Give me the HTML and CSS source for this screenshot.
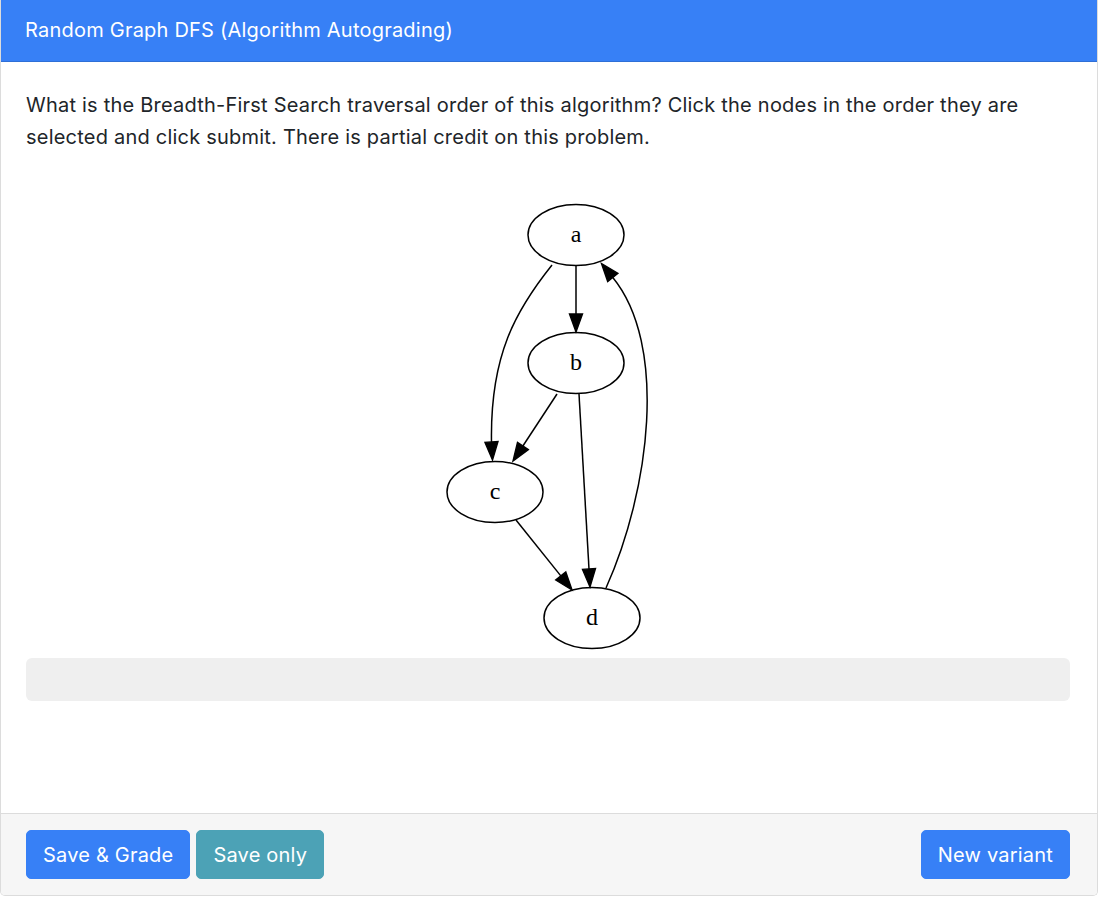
FILE: index.html
```html
<!DOCTYPE html>
<html lang="en">
<head>
<meta charset="utf-8">
<title>Random Graph DFS</title>
<link rel="stylesheet" href="styles.css">
</head>
<body>
<div class="card">
  <div class="card-header">Random Graph DFS (Algorithm Autograding)</div>
  <div class="card-body">
    <p class="prompt">What is the Breadth-First Search traversal order of this algorithm? Click the nodes in the order they are selected and click submit. There is partial credit on this problem.</p>
    <div class="graph-wrap">
      <svg class="graph" width="220" height="458" viewBox="438 198 220 458" xmlns="http://www.w3.org/2000/svg">
        <g fill="none" stroke="#000" stroke-width="1.5">
          <ellipse cx="576" cy="235" rx="48" ry="30.5"/>
          <ellipse cx="576" cy="363" rx="48" ry="30.5"/>
          <ellipse cx="495" cy="492" rx="48" ry="30.5"/>
          <ellipse cx="592" cy="618" rx="48" ry="30.5"/>
          <path d="M576,266 L576,314"/>
          <path d="M552,265 C516,310 490,355 491.5,442"/>
          <path d="M557,394 L522.9,446"/>
          <path d="M579,394 L589,569"/>
          <path d="M516,520 L560.8,575.9"/>
          <path d="M606,588 C650,490 668,345 612.8,277.5"/>
        </g>
        <g fill="#000" stroke="#000" stroke-width="1.4">
          <polygon points="569.5,314 576,332 582.5,314"/>
          <polygon points="485,442.4 492.5,460 498,441.6"/>
          <polygon points="528.3,449.6 513,461 517.5,442.4"/>
          <polygon points="595.5,568.6 590,587 582.5,569.4"/>
          <polygon points="565.8,571.9 572,590 555.7,580"/>
          <polygon points="617.9,273.4 601.5,263.5 607.7,281.6"/>
        </g>
        <g class="labels" text-anchor="middle">
          <text x="576" y="242">a</text>
          <text x="576" y="370">b</text>
          <text x="495" y="499">c</text>
          <text x="592" y="625">d</text>
        </g>
      </svg>
    </div>
    <div class="answer-box"></div>
  </div>
  <div class="card-footer">
    <div class="btn-group">
      <button class="btn btn-primary">Save &amp; Grade</button>
      <button class="btn btn-info">Save only</button>
    </div>
    <button class="btn btn-primary">New variant</button>
  </div>
</div>
</body>
</html>
```
FILE: styles.css
```css
html, body {
  margin: 0;
  padding: 0;
  background: #fff;
}

body {
  font-family: Inter, "Noto Sans", "Liberation Sans", sans-serif;
  font-size: 20px;
  letter-spacing: 0.22px;
  color: #212529;
}

.card {
  width: 1096px;
  border: 1px solid #dcdcdc;
  border-top: none;
  border-radius: 0 0 5px 5px;
  overflow: hidden;
}

.card-header {
  background: #3780f6;
  color: #fff;
  font-size: 20px;
  line-height: 30px;
  padding: 15px 25px 16px;
  border-bottom: 1px solid #2f6fd6;
  margin: 0 -1px;
}

.card-body {
  padding: 27px 27px 112px 25px;
}

.prompt {
  margin: 0;
  line-height: 32px;
}

.graph-wrap {
  display: flex;
  justify-content: center;
  margin-top: 45px;
}

.graph {
  display: block;
}

.labels text {
  font-family: "Liberation Serif", "DejaVu Serif", serif;
  font-size: 24px;
  letter-spacing: 0;
  fill: #000;
}

.answer-box {
  margin-top: 2px;
  height: 43px;
  background: #efefef;
  border-radius: 6px;
}

.card-footer {
  background: #f6f6f6;
  border-top: 1px solid #dcdcdc;
  padding: 16px 27px 16px 25px;
  display: flex;
  justify-content: space-between;
  align-items: center;
}

.btn-group {
  display: flex;
  gap: 6px;
}

.btn {
  font-family: inherit;
  font-size: 20px;
  letter-spacing: 0.2px;
  line-height: 30px;
  padding: 8.5px 16px;
  border: 1px solid transparent;
  border-radius: 5px;
  color: #fff;
  cursor: pointer;
}

.btn-primary {
  background: #3780f6;
  border-color: #3780f6;
}

.btn-info {
  background: #4ca2b6;
  border-color: #4ca2b6;
}
```
